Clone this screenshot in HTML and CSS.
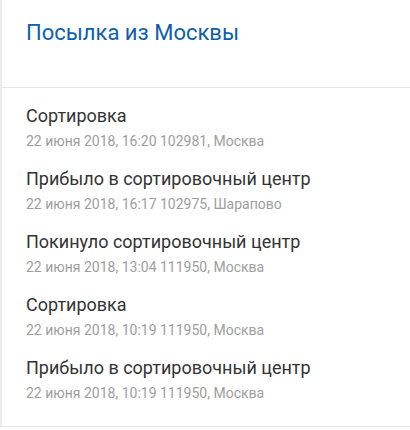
FILE: index.html
```html
<!DOCTYPE html>
<html lang="ru">
<head>
	<meta charset="UTF-8">
	<title>Посылка из Москвы</title>
	<link rel="stylesheet" href="styles.css">
</head>
<body>
	<main class="parcel">
		<header class="parcel-head">
			<h1>Посылка из Москвы</h1>
		</header>
		<ul class="events">
			<li class="event">
				<div class="event-title">Сортировка</div>
				<div class="event-info">22 июня 2018, 16:20 102981, Москва</div>
			</li>
			<li class="event">
				<div class="event-title">Прибыло в сортировочный центр</div>
				<div class="event-info">22 июня 2018, 16:17 102975, Шарапово</div>
			</li>
			<li class="event">
				<div class="event-title">Покинуло сортировочный центр</div>
				<div class="event-info">22 июня 2018, 13:04 111950, Москва</div>
			</li>
			<li class="event">
				<div class="event-title">Сортировка</div>
				<div class="event-info">22 июня 2018, 10:19 111950, Москва</div>
			</li>
			<li class="event">
				<div class="event-title">Прибыло в сортировочный центр</div>
				<div class="event-info">22 июня 2018, 10:19 111950, Москва</div>
			</li>
		</ul>
	</main>
</body>
</html>
```

FILE: styles.css
```css
body {
	background: #fff;
	margin: 0px;
	font-family: Roboto, "Noto Sans", Arial, sans-serif;
}
main.parcel {
	border-left: 2px solid #ececec;
	border-bottom: 1px solid #e6e6e6;
	background: #fff;
}
header.parcel-head {
	border-bottom: 1px solid #e6e6e6;
	height: 88px;
	box-sizing: border-box;
	padding: 20px 24px 0px;
}
header.parcel-head h1 {
	color: #0d5eae;
	font-size: 22px;
	font-weight: 400;
	line-height: 26px;
	margin: 0px;
}
ul.events {
	list-style: none;
	margin: 0px;
	padding: 8px 0px 15px;
}
li.event {
	padding: 9px 24px;
}
.event-title {
	color: #333;
	font-size: 18px;
	line-height: 22px;
}
.event-info {
	color: #9e9e9e;
	font-size: 14px;
	line-height: 17px;
	margin-top: 6px;
}
```
